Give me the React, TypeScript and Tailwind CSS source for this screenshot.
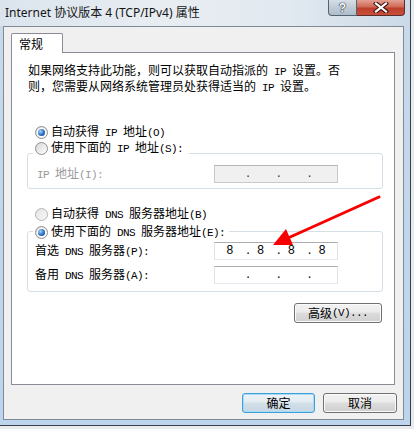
import React from "react";

function T({ s }: { s: string }) {
  const parts = s.split(/([\x20-\x7e]+)/).filter((p) => p !== "");
  return (
    <>
      {parts.map((p, i) =>
        /^[\x20-\x7e]+$/.test(p) ? (
          <span key={i} className="font-['Liberation_Mono',monospace] text-[11px] tracking-[-0.6px] whitespace-pre">
            {p}
          </span>
        ) : (
          <span key={i}>{p}</span>
        )
      )}
    </>
  );
}

function Radio({ on, dim }: { on?: boolean; dim?: boolean }) {
  return (
    <span
      className={
        dim
          ? "w-[13px] h-[13px] rounded-full border border-[#b4b4b4] bg-[linear-gradient(135deg,#e4e4e4,#f7f7f7)] flex items-center justify-center shrink-0"
          : "w-[13px] h-[13px] rounded-full border border-[#8e8f8f] bg-[linear-gradient(135deg,#d6d6d6,#ffffff)] flex items-center justify-center shrink-0"
      }
    >
      {on && (
        <span className="w-[7px] h-[7px] rounded-full bg-[radial-gradient(circle_at_35%_35%,#a6d4fa,#2a6dc0_55%,#0d3f86)] shadow-[0_0_0_1px_#ffffff]" />
      )}
    </span>
  );
}

function IPBox({ v, disabled }: { v: string[]; disabled?: boolean }) {
  return (
    <div
      className={
        disabled
          ? "w-[124px] h-[18px] border border-[#c9c9c9] border-t-[#b5b5b5] bg-[#f0f0f0] flex items-center pl-[5px] text-[#333]"
          : "w-[124px] h-[18px] border border-[#e2e3ea] border-t-[#abadb3] border-b-[#e3e9ef] bg-white flex items-center pl-[5px] text-black"
      }
    >
      {[0, 1, 2, 3].map((i) => (
        <React.Fragment key={i}>
          <span className="w-[25px] pr-[5px] text-center font-['Liberation_Mono',monospace] text-[12px] leading-none">
            {v[i]}
          </span>
          {i < 3 && (
            <span className="w-[6px] text-center font-['Liberation_Mono',monospace] text-[11px] leading-none">.</span>
          )}
        </React.Fragment>
      ))}
    </div>
  );
}

function Btn({ children, def, w }: { children: React.ReactNode; def?: boolean; w: string }) {
  return (
    <div
      className={
        (def
          ? "border-[#3c9fd8] bg-[linear-gradient(#eef4f8_0%,#e3ebf1_45%,#d3dfe8_50%,#c6d6e3_100%)] shadow-[inset_0_0_0_1px_#a7dbf6] "
          : "border-[#707070] bg-[linear-gradient(#f2f2f2_0%,#ebebeb_45%,#dddddd_50%,#cfcfcf_100%)] shadow-[inset_0_0_0_1px_#fbfbfb] ") +
        w +
        " h-[20px] rounded-[3px] border flex items-center justify-center leading-none"
      }
    >
      {children}
    </div>
  );
}

export default function App() {
  return (
    <div className="relative w-[414px] h-[429px] overflow-hidden bg-[#e8ebee] font-['Noto_Sans_CJK_SC',sans-serif] text-[12px] text-black">
      <div className="w-[411px] h-[426px] border-r border-b border-[#36414d] bg-[linear-gradient(180deg,#c9d9ea,#bcd4ec)] flex flex-col">
        {/* Title bar */}
        <div className="h-[26px] flex justify-between bg-[linear-gradient(90deg,#dbe4ed,#e8edf2_40%,#e2e9f0_70%,#cbd9e7)]">
          <span className="self-center pl-[5px] leading-none font-['Noto_Sans','Noto_Sans_CJK_SC',sans-serif] text-[12px] text-[#151515]">
            Internet 协议版本 4 (TCP/IPv4) 属性
          </span>
          <div className="flex self-start mr-[5px]">
            <div className="w-[29px] h-[16px] border border-t-0 border-[#56616e] rounded-bl-[4px] bg-[linear-gradient(#d6dee7,#bfcbd7_50%,#aebdcc)] flex items-center justify-center">
              <span className="font-['Liberation_Sans',sans-serif] font-bold text-[12px] leading-none text-white [text-shadow:0_0_1px_#1f2833,0_0_1px_#1f2833,0_0_1px_#1f2833]">
                ?
              </span>
            </div>
            <div className="w-[48px] h-[16px] border border-l-0 border-t-0 border-[#5a2f2a] rounded-br-[4px] bg-[linear-gradient(#e3a093,#cf6a57_45%,#bd3e2b_55%,#c9503c)] flex items-center justify-center">
              <svg width="16" height="11" viewBox="0 0 16 11">
                <path d="M3 1.5 L13 9.5 M13 1.5 L3 9.5" stroke="#3a1410" strokeWidth="4.2" strokeLinecap="square" />
                <path d="M3 1.5 L13 9.5 M13 1.5 L3 9.5" stroke="#ffffff" strokeWidth="2.2" strokeLinecap="square" />
              </svg>
            </div>
          </div>
        </div>

        {/* Client area */}
        <div className="ml-[3px] w-[401px] h-[394px] border border-[#7f8a96] bg-[#f0f0f0] pl-[7px] pt-[6px] flex flex-col">
          {/* Tab */}
          <div className="relative z-10 w-[52px] h-[20px] -mb-[1px] border border-b-0 border-[#898c95] rounded-t-[2px] bg-white pl-[7px] flex items-center">
            <span className="leading-none text-[12px]">常规</span>
          </div>
          {/* Panel */}
          <div className="w-[384px] h-[333px] border border-[#898c95] bg-white pt-[10px] flex flex-col">
            <div className="pl-[16px] leading-[14px]">
              <div>
                <T s="如果网络支持此功能，则可以获取自动指派的 IP 设置。否" />
              </div>
              <div>
                <T s="则，您需要从网络系统管理员处获得适当的 IP 设置。" />
              </div>
            </div>

            <div className="pl-[15px] pr-[11px] flex flex-col">
              <div className="mt-[29px] h-[16px] flex items-center gap-[3px] pl-[8px] leading-none">
                <Radio on />
                <span>
                  <T s="自动获得 IP 地址(O)" />
                </span>
              </div>
              <div className="relative z-10 w-fit h-[16px] flex items-center gap-[3px] ml-[6px] pl-[2px] pr-[6px] bg-white leading-none">
                <Radio />
                <span>
                  <T s="使用下面的 IP 地址(S):" />
                </span>
              </div>
              <div className="-mt-[3px] border border-[#d5dfe5] rounded-[3px] pt-[11px] pb-[5px] pl-[9px] flex items-center">
                <span className="w-[177px] leading-none text-[#9a9a9a]">
                  <T s="IP 地址(I):" />
                </span>
                <IPBox v={["", "", "", ""]} disabled />
              </div>

              <div className="mt-[17px] h-[16px] flex items-center gap-[3px] pl-[8px] leading-none">
                <Radio dim />
                <span>
                  <T s="自动获得 DNS 服务器地址(B)" />
                </span>
              </div>
              <div className="relative z-10 mt-[2px] w-fit h-[16px] flex items-center gap-[3px] ml-[6px] pl-[2px] pr-[4px] bg-white leading-none">
                <Radio on />
                <span>
                  <T s="使用下面的 DNS 服务器地址(E):" />
                </span>
              </div>
              <div className="-mt-[9px] border border-[#d5dfe5] rounded-[3px] pt-[10px] pb-[7px] pl-[7px] flex flex-col gap-[6px]">
                <div className="flex items-center">
                  <span className="w-[179px] leading-none">
                    <T s="首选 DNS 服务器(P):" />
                  </span>
                  <IPBox v={["8", "8", "8", "8"]} />
                </div>
                <div className="flex items-center">
                  <span className="w-[179px] leading-none">
                    <T s="备用 DNS 服务器(A):" />
                  </span>
                  <IPBox v={["", "", "", ""]} />
                </div>
              </div>

              <div className="mt-[11px] flex justify-end mr-[1px]">
                <Btn w="w-[88px]">
                  <T s="高级(V)..." />
                </Btn>
              </div>
            </div>
          </div>

          {/* Dialog buttons */}
          <div className="mt-[8px] flex justify-end gap-[8px] pr-[6px]">
            <Btn def w="w-[73px]">
              确定
            </Btn>
            <Btn w="w-[74px]">取消</Btn>
          </div>
        </div>
      </div>

      {/* Red annotation arrow */}
      <svg className="absolute left-0 top-0 pointer-events-none" width="414" height="429" viewBox="0 0 414 429">
        <line x1="379" y1="197" x2="288" y2="238" stroke="#f80000" strokeWidth="3" strokeLinecap="round" />
        <polygon points="273,245 293,245 286,229" fill="#f80000" />
      </svg>
    </div>
  );
}
